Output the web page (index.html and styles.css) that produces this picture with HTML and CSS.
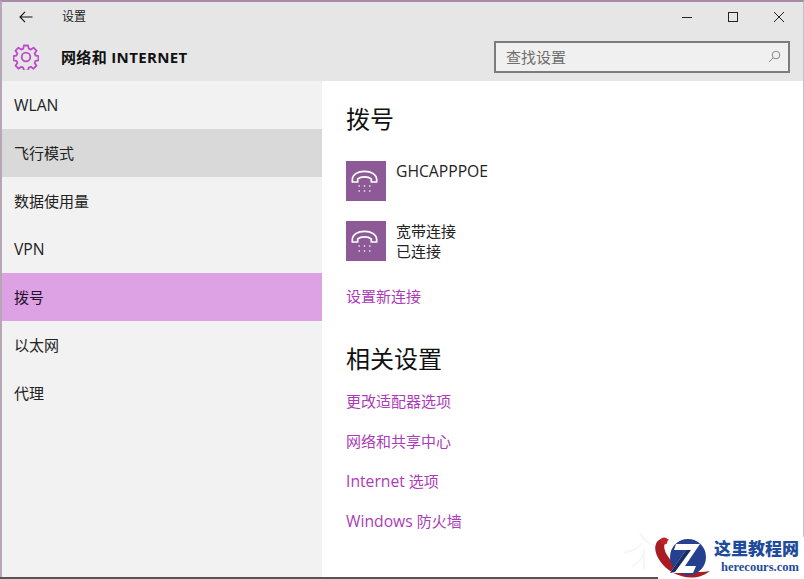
FILE: index.html
```html
<!DOCTYPE html>
<html lang="zh-CN">
<head>
<meta charset="utf-8">
<title>设置</title>
<link rel="stylesheet" href="styles.css">
</head>
<body>
<div class="window">
  <header class="head">
    <div class="titlebar">
      <svg class="back" width="14" height="12" viewBox="0 0 14 12"><path d="M6 .8 1 6l5 5.200M1 6h12.500" fill="none" stroke="#111" stroke-width="1.100"/></svg>
      <span class="apptitle">设置</span>
      <div class="winctl">
        <svg width="12" height="12" viewBox="0 0 12 12"><path d="M1 6.500h10" stroke="#222" stroke-width="1"/></svg>
        <svg width="12" height="12" viewBox="0 0 12 12"><rect x="1.500" y="1.500" width="9" height="9" fill="none" stroke="#222" stroke-width="1"/></svg>
        <svg width="12" height="12" viewBox="0 0 12 12"><path d="M1 1l10 10M11 1 1 11" stroke="#222" stroke-width="1"/></svg>
      </div>
    </div>
    <div class="pagebar">
      <svg class="gear" width="26" height="26" viewBox="0 0 26 26"><path d="M10.900 1.500h4.200l.6 3.200 2.100.9 2.700-1.900 3 3-1.900 2.700.9 2.100 3 .6v4.200l-3 .6-.9 2.100 1.900 2.700-3 3-2.700-1.900-2.100.9-.6 3h-4.200l-.6-3-2.100-.9-2.700 1.900-3-3 1.900-2.700-.9-2.100-3-.6v-4.200l3-.6.900-2.100-1.900-2.700 3-3 2.700 1.900 2.100-.9z" fill="none" stroke="#bc4cc8" stroke-width="1.800" stroke-linejoin="round"/><circle cx="13" cy="13" r="4.300" fill="none" stroke="#bc4cc8" stroke-width="1.800"/></svg>
      <h1 class="pagetitle">网络和 INTERNET</h1>
      <div class="search">
        <span class="search-text">查找设置</span>
        <svg width="13" height="13" viewBox="0 0 13 13"><circle cx="8" cy="5" r="3.800" fill="none" stroke="#888" stroke-width="1"/><path d="M5.200 7.800 1 12" stroke="#888" stroke-width="1"/></svg>
      </div>
    </div>
  </header>
  <div class="body">
    <nav class="side">
      <div class="nav-item lat">WLAN</div>
      <div class="nav-item hover">飞行模式</div>
      <div class="nav-item">数据使用量</div>
      <div class="nav-item lat">VPN</div>
      <div class="nav-item active">拨号</div>
      <div class="nav-item">以太网</div>
      <div class="nav-item">代理</div>
    </nav>
    <main class="content">
      <h2 class="section first">拨号</h2>
      <div class="conn">
        <div class="conn-icon"><svg width="40" height="40" viewBox="0 0 40 40"><path d="M6.300 19C6.300 13.500 11.500 10.300 18.500 10.300S30.700 13.500 30.700 19v2h-5.400v-3.200C23.500 16.300 21.200 15.800 18.500 15.800s-5 .5-6.800 2V21H6.300z" fill="none" stroke="#fff" stroke-width="1.700" stroke-linejoin="round"/><path d="M12.500 25h1.400M17.800 25h1.400M23.100 25h1.400M12.500 30h1.400M17.800 30h1.400M23.100 30h1.400" stroke="#efe6f1" stroke-width="1.500"/></svg></div>
        <div class="conn-text"><div class="lat">GHCAPPPOE</div></div>
      </div>
      <div class="conn">
        <div class="conn-icon"><svg width="40" height="40" viewBox="0 0 40 40"><path d="M6.300 19C6.300 13.500 11.500 10.300 18.500 10.300S30.700 13.500 30.700 19v2h-5.400v-3.200C23.500 16.300 21.200 15.800 18.500 15.800s-5 .5-6.800 2V21H6.300z" fill="none" stroke="#fff" stroke-width="1.700" stroke-linejoin="round"/><path d="M12.500 25h1.400M17.800 25h1.400M23.100 25h1.400M12.500 30h1.400M17.800 30h1.400M23.100 30h1.400" stroke="#efe6f1" stroke-width="1.500"/></svg></div>
        <div class="conn-text"><div>宽带连接</div><div>已连接</div></div>
      </div>
      <a class="link newconn">设置新连接</a>
      <h2 class="section second">相关设置</h2>
      <div class="links">
        <a class="link">更改适配器选项</a>
        <a class="link">网络和共享中心</a>
        <a class="link"><span class="lat">Internet</span> 选项</a>
        <a class="link"><span class="lat">Windows</span> 防火墙</a>
      </div>
    </main>
  </div>
  <div class="bottomline"></div>
  <div class="watermark">
    <svg class="wm-ghost" width="50" height="50" viewBox="0 0 50 50"><path d="M4 28c8-2 14-4 18-10M20 8c4 8 10 12 22 14M24 24v20M12 42c6-4 10-8 12-14" fill="none" stroke="#f6f6f6" stroke-width="2"/></svg>
    <svg class="wm-logo" width="64" height="46" viewBox="0 0 64 46">
      <path d="M6 10C8 4 16 3 19 6 13 8 13 14 17 21c7 12 23 20 43 16-16 13-40 5-50-10C6 21 4 15 6 10z" fill="#a81c22"/>
      <circle cx="14" cy="7" r="3.500" fill="#c0242a"/>
      <circle cx="38" cy="23" r="18" fill="#24408f"/>
      <path d="M26 10h24L35 32h11l-3 7H20L36 16h-12z" fill="#fff"/>
      <path d="M36 16 20 39l5-1 16-22z" fill="#1a2c66"/>
    </svg>
    <div class="wm-text">
      <div class="wm-cn">这里教程网</div>
      <div class="wm-en">herecours.com</div>
    </div>
  </div>
</div>
</body>
</html>
```
FILE: styles.css
```css
* { box-sizing: border-box; }
html, body { margin: 0; padding: 0; }
body {
  width: 804px;
  height: 579px;
  overflow: hidden;
  font-family: "Open Sans", "Noto Sans CJK SC", sans-serif;
  background: #fff;
}
.window {
  position: relative;
  width: 804px;
  height: 579px;
  border-top: 2px solid #a98aa8;
  border-left: 2px solid #b7a6b6;
  border-right: 1px solid #c4c4c4;
  display: flex;
  flex-direction: column;
}
.head { background: #e6e6e6; height: 79px; flex: none; }
.titlebar { display: flex; align-items: center; height: 30px; padding-left: 17px; }
.back { flex: none; }
.apptitle { font-size: 12px; margin-left: 29px; color: #222; line-height: 30px; }
.winctl { margin-left: auto; display: flex; gap: 34px; padding-right: 18px; }
.pagebar { display: flex; align-items: center; height: 49px; padding-left: 11px; }
.gear { flex: none; }
.pagetitle { margin: 0 0 0 22px; font-size: 15px; font-weight: 700; color: #111; letter-spacing: .35px; }
.search {
  margin-left: auto;
  margin-right: 13px;
  width: 296px;
  height: 32px;
  border: 2px solid #7c7c7c;
  background: #f0f0f0;
  display: flex;
  align-items: center;
  justify-content: space-between;
  padding: 0 7px 0 10px;
}
.search-text { font-size: 15px; color: #6e6e6e; }
.body { flex: 1; display: flex; min-height: 0; }
.side { width: 320px; flex: none; background: #f2f2f2; }
.nav-item {
  height: 48px;
  line-height: 48px;
  padding-left: 12px;
  font-size: 15px;
  color: #222;
}
.nav-item.lat { font-size: 15.700px; }
.nav-item.hover { background: #d9d9d9; }
.nav-item.active { background: #dca2e4; color: #24102a; }
.content { flex: 1; padding-left: 24px; background: #fff; }
.section { margin: 0; font-size: 24px; font-weight: 400; line-height: 32px; color: #111; }
.section.first { margin-top: 22px; margin-bottom: 26px; }
.section.second { margin-top: 37px; margin-bottom: 16px; }
.conn { display: flex; height: 40px; margin-bottom: 20px; }
.conn-icon {
  width: 40px;
  height: 40px;
  background: #8d5a97;
  flex: none;
}
.conn-icon svg { display: block; }
.conn-text { margin-left: 10px; font-size: 15px; line-height: 20px; color: #222; }
.lat { font-size: 15.700px; }
.link { display: block; font-size: 15px; line-height: 20px; color: #ac3bb8; }
.newconn { margin-top: 25px; }
.links { display: flex; flex-direction: column; gap: 20px; }
.bottomline { position: absolute; left: -2px; bottom: 0; width: 658px; height: 2px; background: #555; }
.watermark {
  position: absolute;
  right: -1px;
  bottom: 0;
  width: 146px;
  height: 42px;
  display: flex;
  align-items: flex-start;
  background: #fff;
}
.wm-ghost { position: absolute; left: -38px; top: -12px; }
.wm-logo { position: absolute; left: -8px; top: -3px; }
.wm-text { margin-left: 56px; margin-top: 1px; }
.wm-cn { font-family: "Noto Sans CJK SC", serif; font-weight: 900; font-size: 17px; line-height: 20px; color: #1f4b9c; white-space: nowrap; }
.wm-en { font-family: "Liberation Serif", serif; font-weight: 700; font-size: 12.500px; line-height: 14px; color: #1f4b9c; margin-left: 7px; margin-top: 2px; }
```
